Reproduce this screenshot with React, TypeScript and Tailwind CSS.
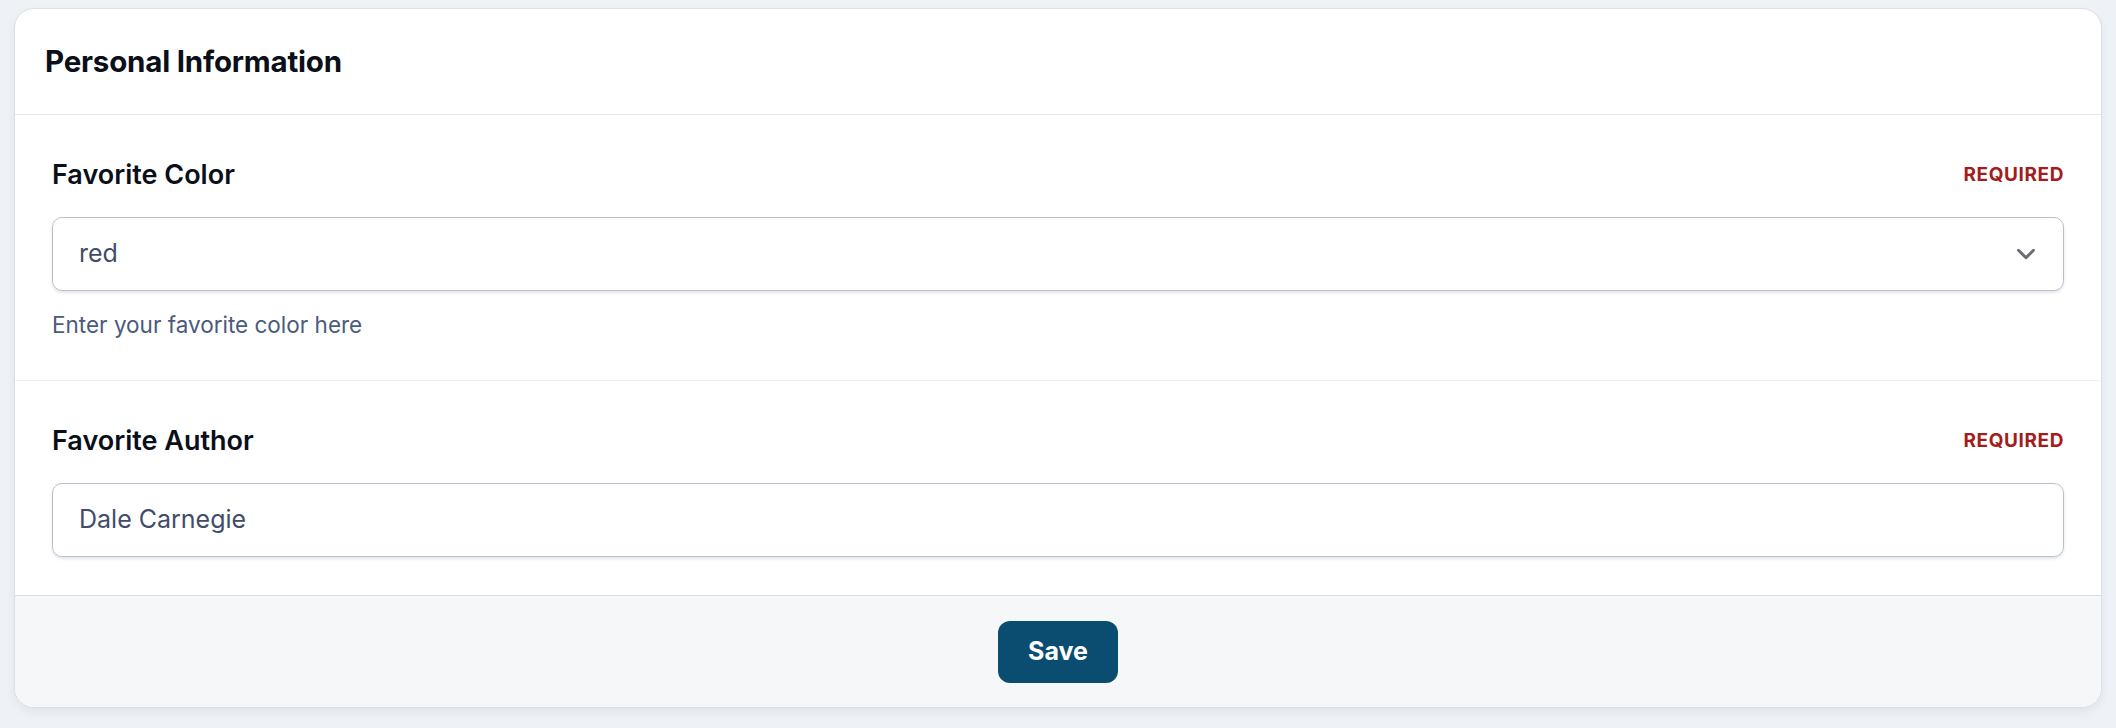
import { ChevronDown } from "lucide-react";

function FieldLabel({ label }: { label: string }) {
  return (
    <div className="flex items-center justify-between h-[36px]">
      <span className="text-[27px] leading-[36px] font-semibold text-[#0b0f19]">{label}</span>
      <span className="text-[19px] font-bold tracking-[0.6px] text-[#a31d1d]">REQUIRED</span>
    </div>
  );
}

export default function App() {
  return (
    <div
      className="min-h-screen bg-[#eef1f6] px-[14px] pt-[8px] pb-[21px]"
      style={{ fontFamily: "Inter, 'Noto Sans', sans-serif" }}
    >
      <div className="bg-white border border-[#dbe0e8] rounded-[20px] overflow-hidden shadow-[0_4px_10px_rgba(30,41,59,0.06)]">
        {/* Header */}
        <div className="h-[106px] flex items-center px-[30px] border-b border-[#e4e7ec]">
          <h2 className="text-[29.5px] font-bold text-[#0b0f19] tracking-[-0.2px]">Personal Information</h2>
        </div>

        {/* Favorite Color */}
        <div className="px-[37px] pt-[42px] pb-[40px] border-b border-[#eef0f3]">
          <FieldLabel label="Favorite Color" />
          <div className="mt-[24px] h-[74px] flex items-center justify-between border border-[#b9c0cd] rounded-[10px] pl-[26px] pr-[22px] shadow-[0_2px_3px_rgba(30,41,59,0.12)]">
            <span className="text-[25px] text-[#3f4d6b]">red</span>
            <ChevronDown className="w-[30px] h-[30px] text-[#6b6e75]" strokeWidth={2.4} />
          </div>
          <p className="mt-[19px] text-[22.5px] leading-[30px] text-[#4a5b7c]">Enter your favorite color here</p>
        </div>

        {/* Favorite Author */}
        <div className="px-[37px] pt-[42px] pb-[38px]">
          <FieldLabel label="Favorite Author" />
          <div className="mt-[24px] h-[74px] flex items-center border border-[#b9c0cd] rounded-[10px] pl-[26px] shadow-[0_2px_3px_rgba(30,41,59,0.12)]">
            <span className="text-[25px] text-[#3f4d6b]">Dale Carnegie</span>
          </div>
        </div>

        {/* Footer */}
        <div className="h-[112px] flex items-center justify-center bg-[#f6f7f9] border-t border-[#d9dee6]">
          <button className="w-[120px] h-[62px] rounded-[12px] bg-[#0a4d71] text-white text-[25px] font-bold">
            Save
          </button>
        </div>
      </div>
    </div>
  );
}
